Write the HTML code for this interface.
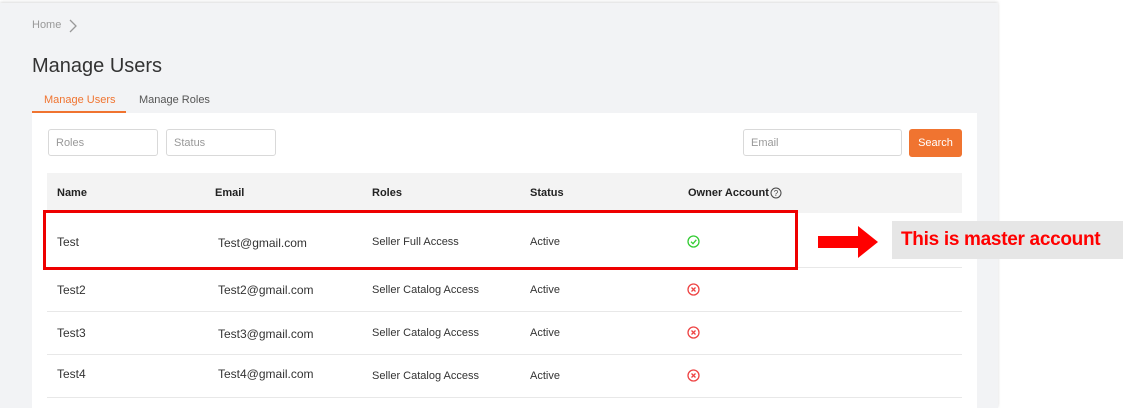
<!DOCTYPE html>
<html><head><style>
body{margin:0;width:1123px;height:408px;background:#fff;position:relative;overflow:hidden;font-family:"Liberation Sans",sans-serif;}
.a{position:absolute}
.bg{left:0;top:3px;width:998px;height:405px;background:#f2f3f5;box-shadow:0 -1px 3px rgba(0,0,0,.15)}
.inp{position:absolute;height:27px;border:1px solid #d9d9d9;border-radius:3px;background:#fff;font-size:11px;color:#999;line-height:27px;padding-left:7px;box-sizing:border-box}
.t{position:absolute;font-size:12px;color:#333}
.h{font-weight:bold;font-size:11px;color:#222}
.line{position:absolute;left:47px;width:915px;height:1px;background:#e8e8e8}
</style></head><body>
<div class="a bg"></div>
<div class="a" style="left:32px;top:19px;font-size:11px;color:#999">Home</div>
<svg class="a" style="left:68px;top:19px" width="10" height="14"><path d="M2 1 L8 7 L2 13" stroke="#999" stroke-width="1.3" fill="none"/></svg>
<div class="a" style="left:32px;top:55px;font-size:20px;color:#333">Manage Users</div>
<div class="a" style="left:44px;top:94px;font-size:11px;color:#f07430">Manage Users</div>
<div class="a" style="left:139px;top:94px;font-size:11px;color:#555">Manage Roles</div>
<div class="a" style="left:32px;top:113px;width:945px;height:295px;background:#fff"></div>
<div class="a" style="left:32px;top:111px;width:94px;height:2px;background:#f07430"></div>
<div class="inp" style="left:48px;top:129px;width:110px">Roles</div>
<div class="inp" style="left:166px;top:129px;width:110px">Status</div>
<div class="inp" style="left:743px;top:129px;width:159px">Email</div>
<div class="a" style="left:909px;top:129px;width:53px;height:28px;background:#f07430;border-radius:3px;color:#fff;font-size:11px;text-align:center;line-height:28px">Search</div>
<div class="a" style="left:47px;top:173px;width:915px;height:40px;background:#f3f3f3"></div>
<div class="t h" style="left:57px;top:187px">Name</div>
<div class="t h" style="left:215px;top:187px">Email</div>
<div class="t h" style="left:372px;top:187px">Roles</div>
<div class="t h" style="left:530px;top:187px">Status</div>
<div class="t h" style="left:688px;top:187px">Owner Account</div>
<svg class="a" style="left:770px;top:187px" width="12" height="12"><circle cx="6" cy="6" r="5" fill="none" stroke="#444"/><text x="6" y="9" font-size="8" text-anchor="middle" fill="#444" font-family="Liberation Sans">?</text></svg>
<div class="line" style="top:267px"></div>
<div class="line" style="top:311px"></div>
<div class="line" style="top:354px"></div>
<div class="line" style="top:397px"></div>

<div class="t" style="left:57px;top:235px">Test</div>
<div class="t" style="left:218px;top:236px">Test@gmail.com</div>
<div class="t" style="left:372px;top:236px;font-size:11px">Seller Full Access</div>
<div class="t" style="left:530px;top:236px;font-size:11px">Active</div>
<svg class="a" style="left:687px;top:235px" width="13" height="13"><circle cx="6.5" cy="6.5" r="5.5" fill="none" stroke="#3c3" stroke-width="1.3"/><path d="M4 6.7 L6 8.7 L9.3 4.8" stroke="#3c3" stroke-width="1.3" fill="none"/></svg>

<div class="t" style="left:57px;top:283px">Test2</div>
<div class="t" style="left:218px;top:283px">Test2@gmail.com</div>
<div class="t" style="left:372px;top:284px;font-size:11px">Seller Catalog Access</div>
<div class="t" style="left:530px;top:284px;font-size:11px">Active</div>
<div class="t" style="left:57px;top:326px">Test3</div>
<div class="t" style="left:218px;top:327px">Test3@gmail.com</div>
<div class="t" style="left:372px;top:327px;font-size:11px">Seller Catalog Access</div>
<div class="t" style="left:530px;top:327px;font-size:11px">Active</div>
<div class="t" style="left:57px;top:367px">Test4</div>
<div class="t" style="left:218px;top:367px">Test4@gmail.com</div>
<div class="t" style="left:372px;top:370px;font-size:11px">Seller Catalog Access</div>
<div class="t" style="left:530px;top:370px;font-size:11px">Active</div>
<svg class="a" style="left:687px;top:283px" width="13" height="13"><circle cx="6.5" cy="6.5" r="5.5" fill="none" stroke="#e44" stroke-width="1.3"/><path d="M4.5 4.5 L8.5 8.5 M8.5 4.5 L4.5 8.5" stroke="#e44" stroke-width="1.3"/></svg>
<svg class="a" style="left:687px;top:326px" width="13" height="13"><circle cx="6.5" cy="6.5" r="5.5" fill="none" stroke="#e44" stroke-width="1.3"/><path d="M4.5 4.5 L8.5 8.5 M8.5 4.5 L4.5 8.5" stroke="#e44" stroke-width="1.3"/></svg>
<svg class="a" style="left:687px;top:369px" width="13" height="13"><circle cx="6.5" cy="6.5" r="5.5" fill="none" stroke="#e44" stroke-width="1.3"/><path d="M4.5 4.5 L8.5 8.5 M8.5 4.5 L4.5 8.5" stroke="#e44" stroke-width="1.3"/></svg>

<div class="a" style="left:43px;top:210px;width:755px;height:60px;border:3px solid #e00;box-sizing:border-box"></div>
<svg class="a" style="left:818px;top:225px" width="62" height="34"><path d="M0 11 H40 V1 L60 17 L40 33 V23 H0Z" fill="#f00"/></svg>
<div class="a" style="left:892px;top:221px;width:231px;height:38px;background:#e6e6e6;color:#f00;font-weight:bold;font-size:19px;line-height:38px;padding-left:9px;box-sizing:border-box;white-space:nowrap;letter-spacing:-0.3px">This is master account</div>
</body></html>
